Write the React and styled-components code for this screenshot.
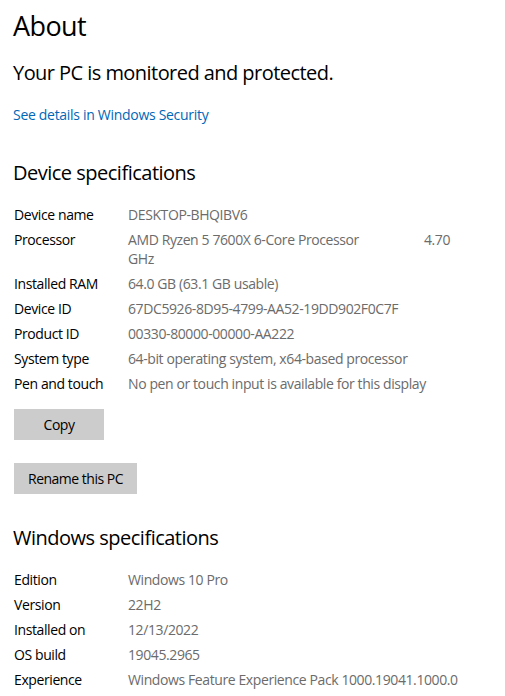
import React from "react"
import styled, { createGlobalStyle } from "styled-components"

const GlobalStyle = createGlobalStyle`
  html, body {
    margin: 0;
    padding: 0;
    background: #ffffff;
  }
  body {
    font-family: "Open Sans", "Noto Sans", sans-serif;
    color: #000000;
  }
`

const Page = styled.div`
  padding: 0 13px;
  width: 505px;
  box-sizing: border-box;
`

const Title = styled.h1`
  margin: 8px 0 0;
  font-size: 27px;
  line-height: 36px;
  font-weight: 400;
  letter-spacing: -0.6px;
`

const Status = styled.p`
  margin: 15px 0 0;
  font-size: 20px;
  line-height: 28px;
  font-weight: 400;
  letter-spacing: -0.55px;
`

const SecurityLink = styled.a`
  display: block;
  margin-top: 18px;
  font-size: 14px;
  line-height: 19px;
  letter-spacing: -0.3px;
  color: #0067b8;
  text-decoration: none;
`

const SectionTitle = styled.h2`
  margin: ${(p) => p.$top}px 0 0;
  font-size: 20px;
  line-height: 28px;
  font-weight: 400;
  letter-spacing: -0.5px;
`

const SpecList = styled.dl`
  margin: ${(p) => p.$top}px 0 0;
  padding-left: 1px;
  display: grid;
  grid-template-columns: 114px 1fr;
  row-gap: 6px;
  font-size: 14px;
  line-height: 19px;
  letter-spacing: -0.4px;
`

const Label = styled.dt`
  margin: 0;
  color: #000000;
`

const Value = styled.dd`
  margin: 0;
  color: #6b6b6b;
`

const SplitLine = styled.span`
  display: flex;
  justify-content: space-between;
  width: 322px;
`

const Button = styled.button`
  display: block;
  margin: ${(p) => p.$top}px 0 0 1px;
  min-width: 90px;
  height: 31px;
  padding: 0 14px;
  border: none;
  background: #cccccc;
  font-family: inherit;
  font-size: 14px;
  letter-spacing: -0.5px;
  color: #000000;
`

const device = [
  ["Device name", "DESKTOP-BHQIBV6"],
  ["Processor", null],
  ["Installed RAM", "64.0 GB (63.1 GB usable)"],
  ["Device ID", "67DC5926-8D95-4799-AA52-19DD902F0C7F"],
  ["Product ID", "00330-80000-00000-AA222"],
  ["System type", "64-bit operating system, x64-based processor"],
  ["Pen and touch", "No pen or touch input is available for this display"],
]

const windows = [
  ["Edition", "Windows 10 Pro"],
  ["Version", "22H2"],
  ["Installed on", "12/13/2022"],
  ["OS build", "19045.2965"],
  ["Experience", "Windows Feature Experience Pack 1000.19041.1000.0"],
]

const Specs = ({ rows, top }) => (
  <SpecList $top={top}>
    {rows.map(([label, value]) => (
      <React.Fragment key={label}>
        <Label>{label}</Label>
        <Value>
          {value ?? (
            <>
              <SplitLine>
                <span>AMD Ryzen 5 7600X 6-Core Processor</span>
                <span>4.70</span>
              </SplitLine>
              GHz
            </>
          )}
        </Value>
      </React.Fragment>
    ))}
  </SpecList>
)

export default function App() {
  return (
    <Page>
      <GlobalStyle />
      <Title>About</Title>
      <Status>Your PC is monitored and protected.</Status>
      <SecurityLink href="#">See details in Windows Security</SecurityLink>

      <SectionTitle $top={35}>Device specifications</SectionTitle>
      <Specs rows={device} top={18} />
      <Button $top={16}>Copy</Button>
      <Button $top={23}>Rename this PC</Button>

      <SectionTitle $top={30}>Windows specifications</SectionTitle>
      <Specs rows={windows} top={18} />
    </Page>
  )
}
